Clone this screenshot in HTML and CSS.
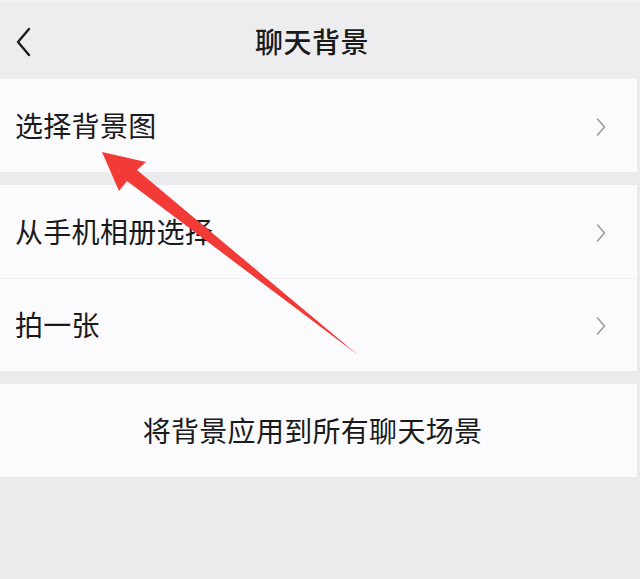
FILE: index.html
```html
<!DOCTYPE html>
<html lang="zh-CN">
<head>
<meta charset="utf-8">
<title>聊天背景</title>
<link rel="stylesheet" href="styles.css">
</head>
<body>
<div class="page">
  <header class="nav">
    <svg class="back" width="18" height="30" viewBox="0 0 18 30"><path d="M14 2 L3 15 L14 28" fill="none" stroke="#1b1b1b" stroke-width="2.4" stroke-linecap="round" stroke-linejoin="round"/></svg>
    <h1 class="title">聊天背景</h1>
  </header>
  <section class="group">
    <div class="row"><span class="label">选择背景图</span><svg class="chev" width="10" height="20" viewBox="0 0 10 20"><path d="M1.5 2 L8.5 10 L1.5 18" fill="none" stroke="#9a9a9c" stroke-width="1.5" stroke-linecap="round" stroke-linejoin="round"/></svg></div>
  </section>
  <section class="group">
    <div class="row"><span class="label">从手机相册选择</span><svg class="chev" width="10" height="20" viewBox="0 0 10 20"><path d="M1.5 2 L8.5 10 L1.5 18" fill="none" stroke="#9a9a9c" stroke-width="1.5" stroke-linecap="round" stroke-linejoin="round"/></svg></div>
    <div class="row"><span class="label">拍一张</span><svg class="chev" width="10" height="20" viewBox="0 0 10 20"><path d="M1.5 2 L8.5 10 L1.5 18" fill="none" stroke="#9a9a9c" stroke-width="1.5" stroke-linecap="round" stroke-linejoin="round"/></svg></div>
  </section>
  <section class="group">
    <div class="row center"><span class="label">将背景应用到所有聊天场景</span></div>
  </section>
  <svg class="arrow" width="640" height="579" viewBox="0 0 640 579">
    <polygon points="102,152 146,162 137,170 358,355 127,181 119,191" fill="#f23a36"/>
  </svg>
</div>
</body>
</html>
```
FILE: styles.css
```css
* { box-sizing: border-box; margin: 0; padding: 0; }
html, body { width: 640px; height: 579px; overflow: hidden; }
body {
  background: #ebebed;
  font-family: "Noto Sans CJK SC", "Noto Sans", sans-serif;
  color: #1a1a1a;
}
.page {
  position: relative;
  width: 640px;
  height: 579px;
  border-top: 2px solid #f5f5f7;
}
.nav {
  height: 77px;
  background: #ededef;
  display: flex;
  align-items: center;
  justify-content: center;
  position: relative;
  padding-right: 16px;
}
.back {
  position: absolute;
  left: 15px;
  top: 25px;
}
.title {
  font-size: 28px;
  font-weight: 500;
  letter-spacing: 0.5px;
  line-height: 1;
}
.group {
  width: 637px;
  background: #fbfbfd;
  margin-bottom: 13px;
}
.row {
  height: 93px;
  display: flex;
  align-items: center;
  justify-content: space-between;
  padding: 0 31px 0 15px;
  border-top: 1px solid #f0f0f2;
}
.group .row:first-child { border-top: none; }
.row.center {
  justify-content: center;
  padding: 0 12px 0 0;
}
.label {
  font-size: 28px;
  line-height: 1;
  letter-spacing: 0.3px;
  padding-bottom: 2px;
}
.chev { display: block; margin-top: 2px; }
.arrow {
  position: absolute;
  left: 0;
  top: -2px;
  pointer-events: none;
}
```
